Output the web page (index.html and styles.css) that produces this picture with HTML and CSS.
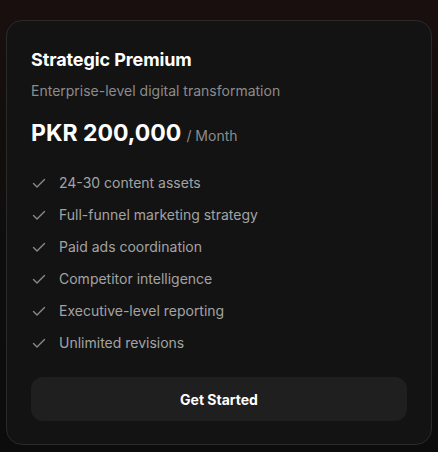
FILE: index.html
```html
<!DOCTYPE html>
<html lang="en">
<head>
<meta charset="utf-8">
<title>Strategic Premium</title>
<link rel="stylesheet" href="styles.css">
</head>
<body>
<main class="page">
  <section class="card">
    <h2 class="title">Strategic Premium</h2>
    <p class="desc">Enterprise-level digital transformation</p>
    <div class="price"><span class="amount">PKR 200,000</span><span class="period">/ Month</span></div>
    <ul class="features">
      <li><svg class="check" viewBox="0 0 16 16"><path d="M2.5 8.5 L6 12 L13.5 4.5"/></svg>24-30 content assets</li>
      <li><svg class="check" viewBox="0 0 16 16"><path d="M2.5 8.5 L6 12 L13.5 4.5"/></svg>Full-funnel marketing strategy</li>
      <li><svg class="check" viewBox="0 0 16 16"><path d="M2.5 8.5 L6 12 L13.5 4.5"/></svg>Paid ads coordination</li>
      <li><svg class="check" viewBox="0 0 16 16"><path d="M2.5 8.5 L6 12 L13.5 4.5"/></svg>Competitor intelligence</li>
      <li><svg class="check" viewBox="0 0 16 16"><path d="M2.5 8.5 L6 12 L13.5 4.5"/></svg>Executive-level reporting</li>
      <li><svg class="check" viewBox="0 0 16 16"><path d="M2.5 8.5 L6 12 L13.5 4.5"/></svg>Unlimited revisions</li>
    </ul>
    <button class="cta">Get Started</button>
  </section>
</main>
</body>
</html>
```
FILE: styles.css
```css
html, body {
  margin: 0;
  padding: 0;
}
body {
  width: 438px;
  height: 452px;
  overflow: hidden;
  background: linear-gradient(180deg, #1a0f0f 0%, #120e0e 30%, #0d0d0d 60%, #0c0c0c 100%);
  font-family: Inter, "Noto Sans", "Liberation Sans", sans-serif;
}
.page {
  padding: 20px 6px 0 6px;
}
.card {
  box-sizing: border-box;
  width: 426px;
  height: 425px;
  background: #131313;
  border: 1px solid #2a2a2a;
  border-radius: 16px;
  padding: 27px 24px 0 24px;
  display: flex;
  flex-direction: column;
}
.title {
  margin: 0;
  font-size: 18px;
  line-height: 24px;
  font-weight: 700;
  color: #ffffff;
  letter-spacing: -0.1px;
}
.desc {
  margin: 9px 0 0 0;
  font-size: 14px;
  line-height: 20px;
  color: #8c8c8c;
}
.price {
  margin-top: 16px;
  display: flex;
  align-items: baseline;
  gap: 5px;
  line-height: 32px;
}
.amount {
  font-size: 23px;
  font-weight: 700;
  color: #ffffff;
}
.period {
  font-size: 14px;
  color: #8c8c8c;
}
.features {
  list-style: none;
  margin: 21px 0 0 0;
  padding: 0;
  display: flex;
  flex-direction: column;
  gap: 12px;
}
.features li {
  display: flex;
  align-items: center;
  gap: 12px;
  font-size: 14px;
  line-height: 20px;
  color: #a3a3a3;
}
.check {
  width: 16px;
  height: 16px;
  fill: none;
  stroke: #8a8a8a;
  stroke-width: 1.4;
  stroke-linecap: round;
  stroke-linejoin: round;
  flex: none;
}
.cta {
  margin-top: 24px;
  height: 44px;
  width: 100%;
  border: none;
  border-radius: 12px;
  background: #1f1f1f;
  color: #ffffff;
  font-family: Inter, "Noto Sans", "Liberation Sans", sans-serif;
  font-size: 14px;
  font-weight: 700;
}
```
